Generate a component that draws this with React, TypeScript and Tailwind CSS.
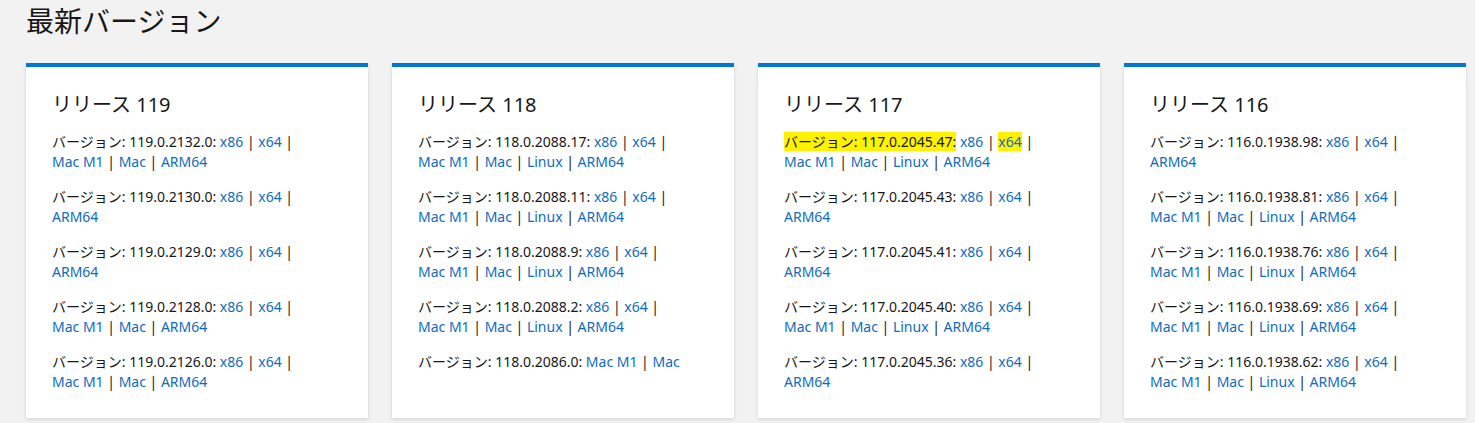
import React from "react";

type Version = {
  v: string;
  lines: string[][];
  mark?: boolean;
  markLinks?: string[];
};

type Release = { n: number; versions: Version[] };

const full = ["Mac M1", "Mac", "ARM64"];
const linux = ["Mac M1", "Mac", "Linux", "ARM64"];
const arch = ["x86", "x64"];

const releases: Release[] = [
  {
    n: 119,
    versions: [
      { v: "119.0.2132.0", lines: [arch, full] },
      { v: "119.0.2130.0", lines: [arch, ["ARM64"]] },
      { v: "119.0.2129.0", lines: [arch, ["ARM64"]] },
      { v: "119.0.2128.0", lines: [arch, full] },
      { v: "119.0.2126.0", lines: [arch, full] },
    ],
  },
  {
    n: 118,
    versions: [
      { v: "118.0.2088.17", lines: [arch, linux] },
      { v: "118.0.2088.11", lines: [arch, linux] },
      { v: "118.0.2088.9", lines: [arch, linux] },
      { v: "118.0.2088.2", lines: [arch, linux] },
      { v: "118.0.2086.0", lines: [["Mac M1", "Mac"]] },
    ],
  },
  {
    n: 117,
    versions: [
      { v: "117.0.2045.47", lines: [arch, linux], mark: true, markLinks: ["x64"] },
      { v: "117.0.2045.43", lines: [arch, ["ARM64"]] },
      { v: "117.0.2045.41", lines: [arch, ["ARM64"]] },
      { v: "117.0.2045.40", lines: [arch, linux] },
      { v: "117.0.2045.36", lines: [arch, ["ARM64"]] },
    ],
  },
  {
    n: 116,
    versions: [
      { v: "116.0.1938.98", lines: [arch, ["ARM64"]] },
      { v: "116.0.1938.81", lines: [arch, linux] },
      { v: "116.0.1938.76", lines: [arch, linux] },
      { v: "116.0.1938.69", lines: [arch, linux] },
      { v: "116.0.1938.62", lines: [arch, linux] },
    ],
  },
];

const Links = ({ items, marked }: { items: string[]; marked: string[] }) => (
  <>
    {items.map((l, i) => (
      <React.Fragment key={l}>
        {i > 0 && " | "}
        <a
          href="#"
          className={`text-[#0f6cbd] ${marked.includes(l) ? "bg-[#fff200]" : ""}`}
        >
          {l}
        </a>
      </React.Fragment>
    ))}
  </>
);

const VersionRow = ({ ver }: { ver: Version }) => {
  const [first, second] = ver.lines;
  const marked = ver.markLinks ?? [];
  return (
    <p className="text-[14px] leading-[20px] text-[#171717] mb-[15px] last:mb-0">
      <span className="block whitespace-nowrap">
        <span className={ver.mark ? "bg-[#fff200]" : ""}>バージョン: {ver.v}:</span>{" "}
        <Links items={first} marked={marked} />
        {second && " |"}
      </span>
      {second && (
        <span className="block whitespace-nowrap">
          <Links items={second} marked={marked} />
        </span>
      )}
    </p>
  );
};

export default function App() {
  return (
    <div
      className="min-h-screen bg-[#f2f2f2] px-[26px] pt-[3px]"
      style={{ fontFamily: '"Noto Sans", "Noto Sans CJK JP", sans-serif' }}
    >
      <h1 className="text-[28px] leading-[36px] font-normal text-[#171717]">最新バージョン</h1>
      <div className="mt-[24px] grid grid-cols-[repeat(4,342px)] gap-6">
        {releases.map((r) => (
          <div
            key={r.n}
            className="bg-white border-t-4 border-[#0078d4] px-[26px] pt-[24px] pb-[26px] shadow-[0_1.6px_3.6px_rgba(0,0,0,0.13),0_0.3px_0.9px_rgba(0,0,0,0.11)]"
          >
            <h2 className="text-[20px] leading-[28px] font-normal text-[#171717] mb-[13px]">
              リリース {r.n}
            </h2>
            {r.versions.map((ver) => (
              <VersionRow key={ver.v} ver={ver} />
            ))}
          </div>
        ))}
      </div>
    </div>
  );
}
